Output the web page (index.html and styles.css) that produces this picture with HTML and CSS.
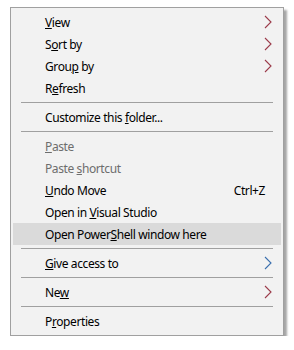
FILE: index.html
```html
<!DOCTYPE html>
<html>
<head>
<meta charset="utf-8">
<link rel="stylesheet" href="styles.css">
</head>
<body>
<div class="menu">
  <div class="item"><span class="label"><u>V</u>iew</span><svg class="arrow red" viewBox="0 0 8 14"><polyline points="1,1 7,7 1,13"/></svg></div>
  <div class="item"><span class="label">S<u>o</u>rt by</span><svg class="arrow red" viewBox="0 0 8 14"><polyline points="1,1 7,7 1,13"/></svg></div>
  <div class="item"><span class="label">Grou<u>p</u> by</span><svg class="arrow red" viewBox="0 0 8 14"><polyline points="1,1 7,7 1,13"/></svg></div>
  <div class="item"><span class="label">R<u>e</u>fresh</span></div>
  <div class="sep"></div>
  <div class="item"><span class="label">Customize this <u>f</u>older...</span></div>
  <div class="sep"></div>
  <div class="item disabled"><span class="label"><u>P</u>aste</span></div>
  <div class="item disabled"><span class="label">Paste <u>s</u>hortcut</span></div>
  <div class="item"><span class="label"><u>U</u>ndo Move</span><span class="shortcut">Ctrl+Z</span></div>
  <div class="item"><span class="label">Open in <u>V</u>isual Studio</span></div>
  <div class="item hover"><span class="label">Open Power<u>S</u>hell window here</span></div>
  <div class="sep"></div>
  <div class="item"><span class="label"><u>G</u>ive access to</span><svg class="arrow blue" viewBox="0 0 8 14"><polyline points="1,1 7,7 1,13"/></svg></div>
  <div class="sep"></div>
  <div class="item"><span class="label">Ne<u>w</u></span><svg class="arrow red" viewBox="0 0 8 14"><polyline points="1,1 7,7 1,13"/></svg></div>
  <div class="sep"></div>
  <div class="item"><span class="label">P<u>r</u>operties</span></div>
</div>
</body>
</html>
```
FILE: styles.css
```css
html, body {
  margin: 0;
  padding: 0;
  background: #ffffff;
}
body {
  padding: 7px 0 0 10px;
  font-family: "Noto Sans", "Open Sans", sans-serif;
  font-size: 12px;
  letter-spacing: -0.4px;
  color: #000;
}
.menu {
  width: 272px;
  background: #f2f2f2;
  border: 1px solid #a0a0a0;
  padding: 3px 0;
  box-shadow: 3px 3px 2px rgba(0, 0, 0, 0.35);
}
.item {
  height: 22px;
  margin: 0 2px;
  padding: 0 10px 0 32px;
  display: flex;
  align-items: center;
  justify-content: space-between;
  white-space: nowrap;
}
.item.hover {
  background: #dadada;
}
.item.disabled {
  color: #6d6d6d;
}
.label u {
  text-decoration-thickness: 1px;
  text-underline-offset: 1px;
}
.shortcut {
  padding-right: 6px;
}
.sep {
  height: 7px;
  display: flex;
  align-items: center;
  padding: 0 10px;
}
.sep::after {
  content: "";
  flex: 1;
  height: 1px;
  background: #a0a0a0;
}
.arrow {
  width: 8px;
  height: 14px;
  margin-right: -1px;
  fill: none;
  stroke-width: 1.1;
}
.arrow.red {
  stroke: #9b3b4a;
}
.arrow.blue {
  stroke: #3a6fae;
}
```
